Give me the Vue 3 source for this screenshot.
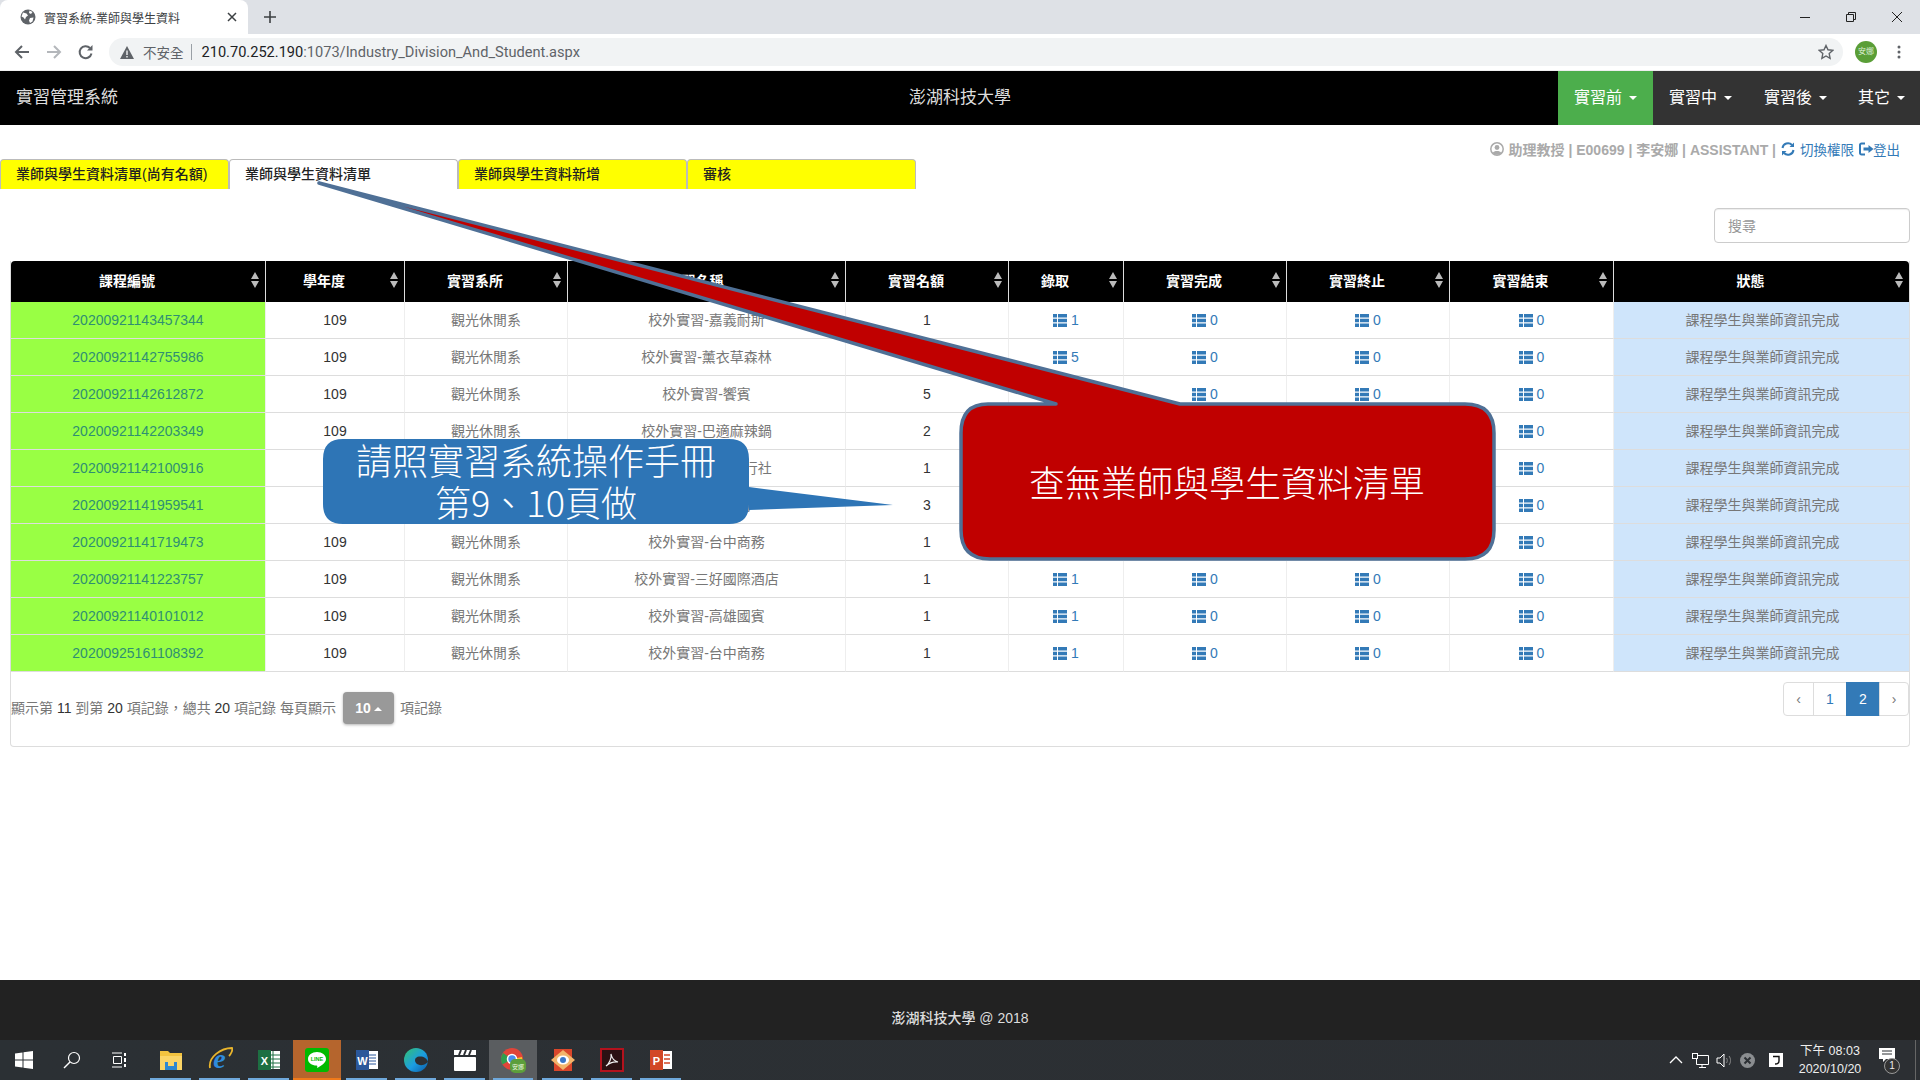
<script setup>
const rows = [
  ['20200921143457344', '校外實習-嘉義耐斯', 1, 1],
  ['20200921142755986', '校外實習-薰衣草森林', 1, 5],
  ['20200921142612872', '校外實習-饗賓', 5, 1],
  ['20200921142203349', '校外實習-巴適麻辣鍋', 2, 1],
  ['20200921142100916', '校外實習-東南旅行社', 1, 1],
  ['20200921141959541', '校外實習-金門', 3, 1],
  ['20200921141719473', '校外實習-台中商務', 1, 1],
  ['20200921141223757', '校外實習-三好國際酒店', 1, 1],
  ['20200921140101012', '校外實習-高雄國賓', 1, 1],
  ['20200925161108392', '校外實習-台中商務', 1, 1]
]
const heads = ['課程編號', '學年度', '實習系所', '實習名稱', '實習名額', '錄取', '實習完成', '實習終止', '實習結束', '狀態']
const widths = [254, 139, 163, 278, 163, 115, 163, 163, 164, 296]
const tabs = ['業師與學生資料清單(尚有名額)', '業師與學生資料清單', '業師與學生資料新增', '審核']
const menus = ['實習前', '實習中', '實習後', '其它']
</script>

<template>
  <div class="screen" lang="zh-Hant">
    <div class="tabstrip">
      <div class="btab">
        <svg class="globe" width="16" height="16" viewBox="0 0 16 16"><circle cx="8" cy="8" r="7.5" fill="#5f6368"/><path d="M3 3.5l3.5 1 1.5 2-2 1.500-1 2.500-1.500-2-2-1zM9.500 1.500l3 1.500-1.500 2-2-1zM10 9l3.500-.5-1 4-2.500 1.500-1-2.500z" fill="#fff"/></svg>
        <span class="btitle">實習系統-業師與學生資料</span>
        <svg class="bclose" width="10" height="10" viewBox="0 0 10 10"><path d="M1 1l8 8M9 1l-8 8" stroke="#3c4043" stroke-width="1.500"/></svg>
      </div>
      <svg class="bplus" width="12" height="12" viewBox="0 0 12 12"><path d="M6 0v12M0 6h12" stroke="#3c4043" stroke-width="1.600"/></svg>
      <div class="winctl">
        <svg width="12" height="12" viewBox="0 0 12 12"><path d="M1 6.500h10" stroke="#222"/></svg>
        <svg width="12" height="12" viewBox="0 0 12 12"><path d="M1.500 3.500h7v7h-7zM3.500 3.500v-2h7v7h-2" fill="none" stroke="#222"/></svg>
        <svg width="12" height="12" viewBox="0 0 12 12"><path d="M1 1l10 10M11 1L1 11" stroke="#222"/></svg>
      </div>
    </div>
    <div class="toolbar">
      <svg class="tico" width="16" height="16" viewBox="0 0 16 16"><path d="M15 8H2M8 2L2 8l6 6" fill="none" stroke="#5f6368" stroke-width="2"/></svg>
      <svg class="tico" width="16" height="16" viewBox="0 0 16 16"><path d="M1 8h13M8 2l6 6-6 6" fill="none" stroke="#b4b7bb" stroke-width="2"/></svg>
      <svg class="tico" width="16" height="16" viewBox="0 0 16 16"><path d="M13.500 9.500A6 6 0 1 1 12 4" fill="none" stroke="#5f6368" stroke-width="2"/><path d="M14.500 1v5.500H9z" fill="#5f6368"/></svg>
      <div class="omni">
        <svg width="14" height="13" viewBox="0 0 14 13"><path d="M7 0l7 13H0z" fill="#5f6368"/><path d="M6.300 4.500h1.400v4.500H6.300zM6.300 10h1.400v1.500H6.300z" fill="#f1f3f4"/></svg>
        <span class="unsafe">不安全</span>
        <span class="osep"></span>
        <span class="url"><b>210.70.252.190</b>:1073/Industry_Division_And_Student.aspx</span>
        <svg class="star" width="16" height="16" viewBox="0 0 16 16"><path d="M8 1.500l2 4.300 4.700.6-3.500 3.200.9 4.700L8 12l-4.100 2.300.9-4.700L1.300 6.400 6 5.800z" fill="none" stroke="#5f6368" stroke-width="1.400"/></svg>
      </div>
      <span class="avatar">安娜</span>
      <svg class="kebab" width="4" height="14" viewBox="0 0 4 14"><circle cx="2" cy="2" r="1.500" fill="#5f6368"/><circle cx="2" cy="7" r="1.500" fill="#5f6368"/><circle cx="2" cy="12" r="1.500" fill="#5f6368"/></svg>
    </div>

    <nav class="nav">
      <span class="brand">實習管理系統</span>
      <span class="school">澎湖科技大學</span>
      <div class="menus">
        <span v-for="(m, i) in menus" :key="m" class="menu" :class="{ on: i === 0, short: i === 3 }">{{ m }}<i class="caret"></i></span>
      </div>
    </nav>

    <main class="main">
      <div class="toprow">
        <div class="tabs">
          <div v-for="(t, i) in tabs" :key="t" class="tab" :class="{ active: i === 1 }">{{ t }}</div>
        </div>
        <div class="user">
          <svg width="14" height="14" viewBox="0 0 14 14"><circle cx="7" cy="7" r="6.200" fill="none" stroke="#aaa" stroke-width="1.500"/><circle cx="7" cy="5.500" r="2.400" fill="#aaa"/><path d="M2.800 11c1-2.600 7.400-2.600 8.400 0-2 2.400-6.400 2.400-8.400 0z" fill="#aaa"/></svg>
          <span>助理教授 | E00699 | 李安娜 | ASSISTANT |</span>
          <svg width="14" height="14" viewBox="0 0 14 14"><path d="M1.500 6a5.500 5.500 0 0 1 9.500-3M12.500 8a5.500 5.500 0 0 1-9.500 3" fill="none" stroke="#337ab7" stroke-width="2"/><path d="M13 .5V5H8.500zM1 13.500V9h4.500z" fill="#337ab7"/></svg>
          <a class="ulink">切換權限</a>
          <svg width="15" height="14" viewBox="0 0 15 14"><path d="M6 1.500H2.500a1.500 1.500 0 0 0-1.500 1.500v8a1.500 1.500 0 0 0 1.500 1.500H6" fill="none" stroke="#337ab7" stroke-width="2"/><path d="M4.500 5.500h5V3l5 4-5 4V8.500h-5z" fill="#337ab7"/></svg>
          <a class="ulink out">登出</a>
        </div>
      </div>
      <div class="searchrow"><input class="search" placeholder="搜尋" /></div>

      <section class="panel">
        <table class="grid">
          <colgroup><col v-for="(w, i) in widths" :key="i" :style="{ width: w + 'px' }" /></colgroup>
          <thead>
            <tr>
              <th v-for="h in heads" :key="h">
                <div class="thin">
                  <span class="thtext">{{ h }}</span>
                  <svg class="sort" width="8" height="16" viewBox="0 0 8 16"><path d="M4 0l4 7H0zM4 16L0 9h8z" fill="#bbb"/></svg>
                </div>
              </th>
            </tr>
          </thead>
          <tbody>
            <tr v-for="r in rows" :key="r[0]">
              <td class="code"><a>{{ r[0] }}</a></td>
              <td class="dark">109</td>
              <td class="cjk">觀光休閒系</td>
              <td class="cjk">{{ r[1] }}</td>
              <td class="dark">{{ r[2] }}</td>
              <td v-for="(n, c) in [r[3], 0, 0, 0]" :key="c" class="listcell">
                <svg width="14" height="13" viewBox="0 0 14 13"><path d="M0 0h4v3.600H0zM5 0h9v3.600H5zM0 4.700h4v3.600H0zM5 4.700h9v3.600H5zM0 9.400h4V13H0zM5 9.400h9V13H5z" fill="#337ab7"/></svg>
                <span>{{ n }}</span>
              </td>
              <td class="status cjk">課程學生與業師資訊完成</td>
            </tr>
          </tbody>
        </table>
        <div class="pager">
          <div class="pinfo">
            <span class="ptext first">顯示第 <em>11</em> 到第 <em>20</em> 項記錄，總共 <em>20</em> 項記錄 每頁顯示</span>
            <button class="size">10<i class="upcaret"></i></button>
            <span class="ptext">項記錄</span>
          </div>
          <div class="pages">
            <span class="pg p1">‹</span><span class="pg p2">1</span><span class="pg p3">2</span><span class="pg p4">›</span>
          </div>
        </div>
      </section>

      <svg class="overlay" width="1920" height="855" viewBox="0 125 1920 855">
        <path d="M988 404H1056L319 183 1180 404H1465Q1494 404 1494 433V530Q1494 559 1465 559H990Q961 559 961 530V433Q961 404 988 404Z" fill="#c00000" stroke="#4f7096" stroke-width="3.500" stroke-linejoin="round"/>
        <text x="1227" y="497" class="ctext" text-anchor="middle">查無業師與學生資料清單</text>
        <path d="M343 439H729Q749 439 749 459V487L893 505 749 510V504Q749 524 729 524H343Q323 524 323 504V459Q323 439 343 439Z" fill="#2e75b6"/>
        <text x="536" y="475" class="ctext" text-anchor="middle">請照實習系統操作手冊</text>
        <text x="536" y="517" class="ctext" text-anchor="middle">第9、10頁做</text>
      </svg>
    </main>

    <footer class="foot">澎湖科技大學 @ 2018</footer>

    <div class="taskbar">
      <div class="tk sys">
        <svg width="18" height="18" viewBox="0 0 18 18"><path d="M0 2.500l7.500-1v7H0zM8.500 1.300L18 0v8.500H8.500zM0 9.500h7.500v7l-7.500-1zM8.500 9.500H18V18l-9.500-1.300z" fill="#fff"/></svg>
      </div>
      <div class="tk sys">
        <svg width="18" height="18" viewBox="0 0 18 18"><circle cx="11" cy="7" r="5.500" fill="none" stroke="#fff" stroke-width="1.200"/><path d="M7 11l-6 6" stroke="#fff" stroke-width="1.500"/></svg>
      </div>
      <div class="tk sys tv">
        <svg width="16" height="18" viewBox="0 0 16 18"><path d="M2.500 5.500h8v7h-8zM1 2h10M1 16h10" fill="none" stroke="#fff"/><path d="M13 2h2v3h-2zM13 7h2v4h-2zM13 13h2v3h-2z" fill="#fff"/></svg>
      </div>

      <div class="tk app run first-app">
        <svg width="24" height="24" viewBox="0 0 24 24"><path d="M1 3h8l2 2h12v17H1z" fill="#f3c33f"/><path d="M1 8h22v14H1z" fill="#fbd567"/><path d="M6 14h12v8H6z" fill="#2f88d0"/><path d="M9 14h6v4H9z" fill="#fbd567"/></svg>
      </div>
      <div class="tk app run">
        <svg width="26" height="26" viewBox="0 0 26 26"><text x="12.500" y="21" class="ie">e</text><path d="M3 21C1 10 14 1 25 1c1 2-1 6-3 8" fill="none" stroke="#e9b52c" stroke-width="1.800"/></svg>
      </div>
      <div class="tk app run">
        <svg width="24" height="24" viewBox="0 0 24 24"><rect x="9" y="3" width="14" height="18" fill="#fff"/><path d="M16 3v18M9 7h14M9 11h14M9 15h14M9 19h14" stroke="#1f7145"/><rect x="1" y="2" width="13" height="20" fill="#1d6f42"/><text x="7.500" y="16.500" class="offl">X</text></svg>
      </div>
      <div class="tk app lineapp">
        <svg width="24" height="24" viewBox="0 0 24 24"><rect width="24" height="24" rx="3" fill="#00b900"/><path d="M12 4c5 0 9 3 9 7 0 4-5 7-9 9 .5-1.500.5-2.500-.5-2.500C7 17.500 3 15 3 11c0-4 4-7 9-7z" fill="#fff"/><text x="12" y="13" class="ltext">LINE</text></svg>
      </div>
      <div class="tk app run">
        <svg width="24" height="24" viewBox="0 0 24 24"><rect x="9" y="3" width="14" height="18" fill="#fff"/><path d="M13 7h8M13 10h8M13 13h8M13 16h8" stroke="#2b579a"/><rect x="1" y="2" width="13" height="20" fill="#2b579a"/><text x="7.500" y="16.500" class="offl">W</text></svg>
      </div>
      <div class="tk app run">
        <svg width="26" height="26" viewBox="0 0 26 26"><defs><linearGradient id="edg" x1="0" y1="0" x2="1" y2="1"><stop offset="0" stop-color="#34c26f"/><stop offset=".55" stop-color="#1b9de2"/><stop offset="1" stop-color="#0c59a4"/></linearGradient></defs><circle cx="13" cy="13" r="12" fill="url(#edg)"/><path d="M25 15c-1-4-5-6-9-5.500-4 .5-5 4-3 6.500 2 2.500 7 3 10 .5z" fill="#2d3034"/></svg>
      </div>
      <div class="tk app run">
        <svg width="24" height="24" viewBox="0 0 24 24"><rect x="1" y="9" width="22" height="14" rx="1" fill="#fff"/><rect x="1" y="2" width="22" height="5" fill="#fff"/><path d="M6 7l2-5M11 7l2-5M16 7l2-5" stroke="#2d3034" stroke-width="2"/></svg>
      </div>
      <div class="tk app chromeapp">
        <svg width="26" height="28" viewBox="0 0 26 28"><circle cx="12" cy="13" r="11" fill="#e0453a"/><path d="M12 13L2.500 18.500A11 11 0 0 1 3 7z" fill="#2f9e4f"/><path d="M12 13l10-2a11 11 0 0 1-10 13z" fill="#f8c52c"/><circle cx="12" cy="13" r="4.500" fill="#4a8ef0" stroke="#fff" stroke-width="1.500"/><rect x="10" y="13" width="16" height="14" rx="5" fill="#5c9e3b"/><text x="18" y="23" class="cbadge">安娜</text></svg>
      </div>
      <div class="tk app run">
        <svg width="24" height="26" viewBox="0 0 24 26"><rect x="3" y="2" width="18" height="22" fill="#d9472b"/><path d="M0 13L12 3l12 10-12 10z" fill="#f2b56b"/><ellipse cx="12" cy="13" rx="6" ry="4.500" fill="#fff"/><circle cx="12" cy="13" r="3" fill="#3a78c9"/></svg>
      </div>
      <div class="tk app run">
        <svg width="24" height="24" viewBox="0 0 24 24"><rect x="1" y="1" width="22" height="22" fill="#2b1113" stroke="#b3121d" stroke-width="2"/><path d="M6 18c3-2 6-8 5-12 1 5 3 7 7 8-4-.5-8 .5-12 4z" fill="none" stroke="#f2f2f2" stroke-width="1.200"/></svg>
      </div>
      <div class="tk app run">
        <svg width="24" height="24" viewBox="0 0 24 24"><rect x="9" y="3" width="14" height="18" fill="#fff"/><path d="M15 7h6M15 11h6M15 15h6" stroke="#d24726" stroke-width="1.500"/><rect x="1" y="2" width="13" height="20" fill="#d24726"/><text x="7.500" y="16.500" class="offl">P</text></svg>
      </div>

      <div class="tray">
        <svg class="t1" width="14" height="8" viewBox="0 0 14 8"><path d="M1 7l6-6 6 6" fill="none" stroke="#fff" stroke-width="1.300"/></svg>
        <svg class="t2" width="17" height="15" viewBox="0 0 17 15"><path d="M4.500 2.500h12v9h-12zM10 11.500v3M7 14.500h7" fill="none" stroke="#fff"/><rect x=".5" y=".5" width="5" height="5" fill="#2b2f33" stroke="#fff"/></svg>
        <svg class="t3" width="16" height="15" viewBox="0 0 16 15"><path d="M1 5h3l4-4v13l-4-4H1z" fill="none" stroke="#fff"/><path d="M10.500 5c1 1.500 1 3.500 0 5M13 3c2 2.500 2 6.500 0 9" fill="none" stroke="#888"/></svg>
        <svg class="t4" width="15" height="15" viewBox="0 0 15 15"><circle cx="7.500" cy="7.500" r="7.500" fill="#8a8d90"/><path d="M4.500 4.500l6 6M10.500 4.500l-6 6" stroke="#2b2f33" stroke-width="2"/></svg>
        <span class="ime"><svg width="14" height="14" viewBox="0 0 14 14"><rect width="14" height="14" fill="#fff"/><path d="M4 3.500h6V8c0 2-2 3-4 3" fill="none" stroke="#111" stroke-width="1.400"/></svg></span>
        <div class="clock"><span>下午 08:03</span><span>2020/10/20</span></div>
        <span class="notif">
          <svg width="16" height="14" viewBox="0 0 16 14"><path d="M0 0h16v11H7l-3 3v-3H0z" fill="#fff"/><path d="M3 3h10M3 6h10" stroke="#2b2f33"/></svg>
          <b>1</b>
        </span>
      </div>
    </div>
  </div>
</template>

<style scoped>
.screen {
  width: 1920px; height: 1080px; display: flex; flex-direction: column; overflow: hidden;
  background: #fff; color: #777; font: 14px "Liberation Sans", "Noto Sans CJK TC", sans-serif;
}
.tabstrip { height: 34px; background: #dee1e6; display: flex; align-items: center; flex: none; }
.btab { width: 248px; height: 34px; background: #fff; border-radius: 8px 8px 0 0; display: flex; align-items: center; padding-left: 20px; box-sizing: border-box; }
.btitle { margin-left: 8px; width: 145px; font-size: 12px; color: #3c4043; white-space: nowrap; }
.bclose { margin-left: 38px; flex: none; }
.bplus { margin-left: 16px; }
.winctl { margin-left: auto; display: flex; gap: 34px; padding-right: 17px; }
.toolbar { height: 36px; background: #fff; display: flex; align-items: center; padding-left: 14px; flex: none; border-bottom: 1px solid #eee; box-sizing: content-box; }
.tico { margin-right: 16px; }
.omni { margin-left: -1px; width: 1734px; height: 28px; border-radius: 14px; background: #f1f3f4; display: flex; align-items: center; padding-left: 11px; box-sizing: border-box; font-size: 14px; }
.unsafe { margin-left: 9px; color: #5f6368; font-size: 13.500px; }
.osep { width: 1px; height: 16px; background: #9aa0a6; margin: 0 10px 0 7px; }
.url { color: #5f6368; font: 14.600px "Roboto", sans-serif; white-space: nowrap; }
.url b { font-weight: 400; color: #202124; }
.star { margin-left: auto; margin-right: 9px; }
.avatar { margin-left: 12px; width: 22px; height: 22px; border-radius: 50%; background: #5a9e37; color: #dfeed6; font-size: 8px; text-align: center; line-height: 22px; flex: none; }
.kebab { margin-left: 20px; }

.nav { height: 54px; background: #000; display: flex; align-items: center; flex: none; position: relative; color: #ddd; font-size: 17px; }
.brand { margin-left: 16px; padding-bottom: 5px; }
.school { position: absolute; left: 0; right: 0; text-align: center; padding-bottom: 5px; }
.menus { margin-left: auto; display: flex; height: 54px; background: #333; position: relative; }
.menu { width: 95px; display: flex; align-items: center; justify-content: center; color: #fff; font-size: 16px; box-sizing: border-box; padding-bottom: 5px; }
.menu.on { background: #4cae4c; }
.menu.short { width: 77px; padding-left: 15px; justify-content: flex-start; }
.caret { display: inline-block; margin-left: 7px; margin-top: 4px; border-top: 4px solid #fff; border-left: 4px solid transparent; border-right: 4px solid transparent; }

.main { flex: 1; position: relative; min-height: 0; }
.toprow { height: 64px; display: flex; justify-content: space-between; }
.tabs { display: flex; align-self: flex-end; }
.tab { width: 229px; height: 30px; box-sizing: border-box; background: #ff0; color: #222; border: 1px solid #bbb; border-bottom: 0; border-radius: 4px 4px 0 0; padding-left: 15px; line-height: 28px; font-size: 14px; font-weight: 500; white-space: nowrap; }
.tab.active { background: #fff; }
.user { display: flex; align-items: center; height: 20px; margin: 14px 20px 0 0; color: #aaa; font-weight: 700; gap: 5px; white-space: pre; }
.ulink { color: #337ab7; font-weight: 400; font-size: 13.500px; }
.ulink.out { margin-left: -6px; }
.searchrow { margin-top: 19px; height: 35px; display: flex; justify-content: flex-end; padding-right: 10px; }
.search { width: 196px; height: 35px; box-sizing: border-box; border: 1px solid #ccc; border-radius: 4px; padding: 0 13px; font: inherit; outline: 0; box-shadow: inset 0 1px 1px rgba(0,0,0,.075); }
.search::placeholder { color: #999; }

.panel { margin: 18px 10px 0 10px; height: 486px; border: 1px solid #ddd; border-top: 0; border-radius: 0 0 4px 4px; box-sizing: border-box; }
.grid { width: 1898px; table-layout: fixed; border-collapse: separate; border-spacing: 0; text-align: center; }
th { height: 41px; padding: 0 0 3px; box-sizing: border-box; background: #000; color: #fff; font-weight: 700; border-left: 1px solid #ddd; }
th:first-child { border-left: 0; border-radius: 4px 0 0 0; }
th:last-child { border-radius: 0 4px 0 0; }
.thin { display: flex; align-items: center; padding-right: 6px; }
.thtext { flex: 1; margin-right: 8px; }
.sort { flex: none; }
td { height: 37px; padding: 0; box-sizing: border-box; border-bottom: 1px solid #ddd; border-left: 1px solid #eee; color: #777; }
td.cjk { padding-bottom: 2px; }
td.code { background: #9f4; border-left: 0; }
td.code a { color: #2f8f72; }
td.dark { color: #333; }
td.status { background: #cfe5fb; color: #777; padding-left: 2px; }
.listcell { color: #337ab7; }
.listcell svg { vertical-align: -2px; margin-right: 4px; }
.pager { display: flex; justify-content: space-between; }
.pinfo { display: flex; align-items: center; height: 32px; margin-top: 20px; gap: 6px; }
.ptext { margin-top: -3px; }
.ptext.first { margin-right: 1px; }
.pinfo em { font-style: normal; color: #333; }
.size { width: 51px; height: 32px; border: 0; border-radius: 4px; background: #999; color: #fff; font: 700 14px "Liberation Sans", sans-serif; box-shadow: 0 1px 3px rgba(0,0,0,.3); padding: 0; }
.upcaret { display: inline-block; margin-left: 3px; vertical-align: 2px; border-bottom: 4px solid #fff; border-left: 4px solid transparent; border-right: 4px solid transparent; }
.pages { display: flex; margin-top: 10px; height: 34px; }
.pg { height: 34px; box-sizing: border-box; border: 1px solid #ddd; margin-left: -1px; color: #777; display: flex; align-items: center; justify-content: center; }
.p1 { width: 31px; border-radius: 4px 0 0 4px; }
.p2 { width: 34px; color: #337ab7; }
.p3 { width: 34px; background: #337ab7; border-color: #337ab7; color: #fff; }
.p4 { width: 30px; border-radius: 0 4px 4px 0; }

.overlay { position: absolute; left: 0; top: 0; pointer-events: none; }
.ctext { font: 300 36px "Noto Sans CJK TC", "Liberation Serif", sans-serif; fill: #fff; }

.foot { height: 60px; background: #222; color: #ddd; text-align: center; flex: none; font-weight: 500; padding-top: 29px; box-sizing: border-box; line-height: 18px; }
.taskbar { height: 40px; background: linear-gradient(90deg, #2b3034, #2c2f33); display: flex; align-items: center; flex: none; }
.tk { height: 40px; display: flex; align-items: center; justify-content: center; box-sizing: border-box; flex: none; }
.sys { width: 48px; }
.tv { padding-right: 2px; }
.app { width: 49px; }
.first-app { margin-left: 2px; }
.run { position: relative; }
.run::after, .chromeapp::after { content: ""; position: absolute; left: 4px; right: 4px; bottom: 0; height: 2px; background: #6fa9dc; }
.lineapp { background: #b5652d; border-bottom: 2px solid #f07a1a; padding-top: 2px; width: 48px; margin: 0 1px 0 0; }
.chromeapp { background: #5a5d60; position: relative; width: 48px; margin-right: 1px; }
.ie { font: italic 700 28px "Liberation Serif", serif; fill: #2f8bdc; text-anchor: middle; }
.offl { font: 700 11px "Liberation Sans", sans-serif; fill: #fff; text-anchor: middle; }
.ltext { font: 700 5.500px "Liberation Sans", sans-serif; fill: #00b900; text-anchor: middle; }
.cbadge { font: 6px "Noto Sans CJK TC", sans-serif; fill: #e8f3dd; text-anchor: middle; }
.tray { margin-left: auto; display: flex; align-items: center; color: #fff; height: 40px; border-right: 1px solid #666; margin-right: 4px; padding-right: 16px; }
.t1 { margin-right: 8.500px; }
.t2 { margin-right: 7.500px; }
.t3 { margin-right: 7.500px; }
.t4 { margin-right: 14.500px; }
.ime { display: flex; margin-right: 7px; }
.clock { width: 80px; display: flex; flex-direction: column; align-items: center; font-size: 12.500px; line-height: 18px; color: #eee; margin-right: 5px; }
.notif { position: relative; width: 24px; height: 24px; display: flex; padding-left: 4px; box-sizing: border-box; }
.notif b { position: absolute; right: -1px; bottom: -2px; width: 14px; height: 14px; border: 1px solid #999; border-radius: 50%; background: #333; color: #eee; font-size: 10px; font-weight: 400; text-align: center; line-height: 14px; }
</style>
